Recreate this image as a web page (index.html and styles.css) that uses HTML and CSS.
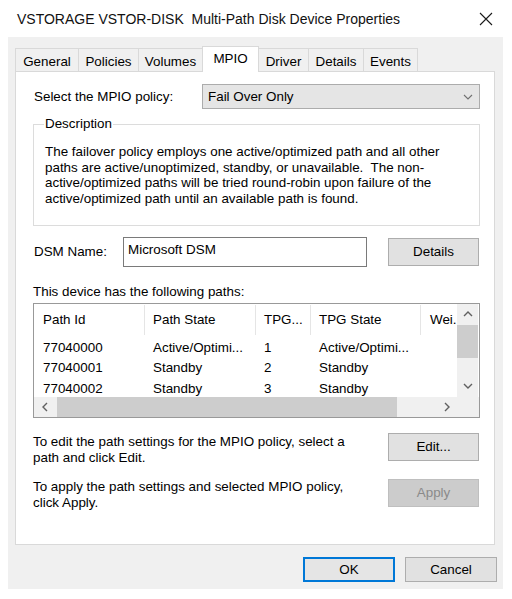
FILE: index.html
```html
<!DOCTYPE html>
<html>
<head>
<meta charset="utf-8">
<link rel="stylesheet" href="styles.css">
</head>
<body>
<div class="window">
  <div class="titlebar">
    <span class="title">VSTORAGE VSTOR-DISK&nbsp; Multi-Path Disk Device Properties</span>
    <svg class="close" width="14" height="14" viewBox="0 0 14 14"><path d="M1 1 L13 13 M13 1 L1 13" stroke="#1a1a1a" stroke-width="1.1" fill="none"/></svg>
  </div>
  <div class="dialog">
    <div class="tabs">
      <div class="tab t-general">General</div>
      <div class="tab t-policies">Policies</div>
      <div class="tab t-volumes">Volumes</div>
      <div class="tab t-mpio active">MPIO</div>
      <div class="tab t-driver">Driver</div>
      <div class="tab t-details">Details</div>
      <div class="tab t-events">Events</div>
    </div>
    <div class="panel">
      <div class="policy-row">
        <span class="policy-lbl">Select the MPIO policy:</span>
        <div class="select">
          <span>Fail Over Only</span>
          <svg width="10" height="6" viewBox="0 0 10 6"><path d="M1 1 L5 5 L9 1" stroke="#707070" stroke-width="1.1" fill="none"/></svg>
        </div>
      </div>
      <fieldset class="desc">
        <legend>Description</legend>
        <p>The failover policy employs one active/optimized path and all other<br>paths are active/unoptimized, standby, or unavailable.&nbsp; The non-<br>active/optimized paths will be tried round-robin upon failure of the<br>active/optimized path until an available path is found.</p>
      </fieldset>
      <div class="dsm-row">
        <span class="dsm-lbl">DSM Name:</span>
        <div class="input">Microsoft DSM</div>
        <button class="btn details">Details</button>
      </div>
      <div class="paths-lbl">This device has the following paths:</div>
      <div class="listbox">
        <div class="list-content">
          <div class="lrow head">
            <div>Path Id</div><div>Path State</div><div>TPG...</div><div>TPG State</div><div>Wei.</div>
          </div>
          <div class="lrow">
            <div>77040000</div><div>Active/Optimi...</div><div>1</div><div>Active/Optimi...</div><div></div>
          </div>
          <div class="lrow">
            <div>77040001</div><div>Standby</div><div>2</div><div>Standby</div><div></div>
          </div>
          <div class="lrow">
            <div>77040002</div><div>Standby</div><div>3</div><div>Standby</div><div></div>
          </div>
        </div>
        <div class="vscroll">
          <div class="sb-btn v"><svg width="10" height="6" viewBox="0 0 10 6"><path d="M1 5 L5 1 L9 5" stroke="#606060" stroke-width="1.4" fill="none"/></svg></div>
          <div class="v-track"><div class="v-thumb"></div></div>
          <div class="sb-btn v"><svg width="10" height="6" viewBox="0 0 10 6"><path d="M1 1 L5 5 L9 1" stroke="#606060" stroke-width="1.4" fill="none"/></svg></div>
        </div>
        <div class="hscroll">
          <div class="sb-btn h"><svg width="6" height="10" viewBox="0 0 6 10"><path d="M5 1 L1 5 L5 9" stroke="#606060" stroke-width="1.4" fill="none"/></svg></div>
          <div class="h-track"><div class="h-thumb"></div></div>
          <div class="sb-btn h"><svg width="6" height="10" viewBox="0 0 6 10"><path d="M1 1 L5 5 L1 9" stroke="#606060" stroke-width="1.4" fill="none"/></svg></div>
        </div>
        <div class="corner"></div>
      </div>
      <div class="action-row edit-row">
        <p>To edit the path settings for the MPIO policy, select a<br>path and click Edit.</p>
        <button class="btn">Edit...</button>
      </div>
      <div class="action-row apply-row">
        <p>To apply the path settings and selected MPIO policy,<br>click Apply.</p>
        <button class="btn" disabled>Apply</button>
      </div>
    </div>
    <div class="footer">
      <button class="btn ok">OK</button>
      <button class="btn">Cancel</button>
    </div>
  </div>
</div>
</body>
</html>
```
FILE: styles.css
```css
* { box-sizing: border-box; }
html, body { margin: 0; padding: 0; background: #fff; }
body {
  width: 512px;
  height: 599px;
  font-family: "Liberation Sans", Arial, sans-serif;
  font-size: 13.4px;
  color: #000;
  overflow: hidden;
}
.titlebar {
  height: 37px;
  display: flex;
  align-items: center;
  padding-left: 17px;
  padding-top: 1px;
}
.title { font-size: 14px; color: #111; }
.close { margin-left: auto; margin-right: 19px; }

.dialog {
  margin: 0 9px 0 8px;
  background: #f0f0f0;
  padding: 9px 6px 7px 7px;
}
.tabs {
  display: flex;
  align-items: flex-end;
  height: 25px;
}
.tab {
  height: 23px;
  border: 1px solid #d9d9d9;
  border-bottom: none;
  background: #f0f0f0;
  margin-right: -1px;
  display: flex;
  align-items: center;
  justify-content: center;
  padding-top: 3px;
  white-space: nowrap;
}
.tab.active {
  height: 26px;
  background: #fff;
  margin-bottom: -1px;
  padding-top: 0;
  padding-bottom: 2px;
  position: relative;
  z-index: 1;
}
.t-general { width: 64px; }
.t-policies { width: 61px; }
.t-volumes { width: 65px; }
.t-mpio { width: 57px; }
.t-driver { width: 51px; }
.t-details { width: 56px; }
.t-events { width: 55px; }

.panel {
  background: #fff;
  border: 1px solid #d9d9d9;
  height: 474px;
  margin-right: 2px;
  padding: 12px 14px 0 17px;
}
.policy-row {
  display: flex;
  align-items: center;
  height: 25px;
}
.policy-lbl { width: 169px; padding-left: 1px; }
.select {
  width: 278px;
  height: 25px;
  background: #e5e5e5;
  border: 1px solid #acacac;
  display: flex;
  align-items: center;
  justify-content: space-between;
  padding: 0 6px 0 5px;
}
.desc {
  margin: 7px 0 0;
  padding: 12px 11px 18px;
  border: 1px solid #dcdcdc;
  min-width: 0;
}
.desc legend {
  padding: 0 1px;
  margin-left: -1px;
  line-height: 16px;
}
.desc p {
  margin: 0;
  line-height: 15.7px;
  white-space: nowrap;
}
.dsm-row {
  display: flex;
  align-items: center;
  margin-top: 11px;
  height: 30px;
}
.dsm-lbl { width: 90px; padding-left: 1px; }
.input {
  width: 244px;
  height: 30px;
  border: 1px solid #7a7a7a;
  background: #fff;
  padding: 4px 0 0 4px;
  line-height: 16px;
}
.btn {
  font-family: "Liberation Sans", Arial, sans-serif;
  font-size: 13.4px;
  color: #000;
  background: #e1e1e1;
  border: 1px solid #adadad;
  padding: 0;
  margin: 0;
  width: 91px;
  height: 28px;
}
.btn:disabled {
  background: #cccccc;
  border-color: #bfbfbf;
  color: #8a8a8a;
}
.details { margin-left: auto; margin-right: 1px; }
.paths-lbl {
  margin-top: 17px;
  line-height: 16px;
}
.listbox {
  margin-top: 3px;
  height: 115px;
  border: 1px solid #999;
  display: grid;
  grid-template-columns: 1fr 22px;
  grid-template-rows: 93px 20px;
}
.list-content { overflow: hidden; }
.lrow {
  display: grid;
  grid-template-columns: 111px 111px 55px 110px 1fr;
  height: 20.5px;
  align-items: center;
}
.lrow > div {
  padding-left: 8px;
  white-space: nowrap;
  overflow: hidden;
}
.lrow > div:first-child { padding-left: 9px; }
.lrow.head {
  height: 33px;
  align-items: stretch;
}
.lrow.head > div {
  display: flex;
  align-items: center;
  border-right: 1px solid #e5e5e5;
  margin: 1px 0 2px;
}
.lrow.head > div:last-child { border-right: none; padding-left: 9px; }
.vscroll {
  background: #f0f0f0;
  display: flex;
  flex-direction: column;
  margin-right: 1px;
}
.sb-btn {
  display: flex;
  align-items: center;
  justify-content: center;
}
.sb-btn.v { height: 21px; }
.sb-btn.h { width: 21px; }
.v-track { flex: 1; }
.v-thumb { height: 33px; background: #cdcdcd; }
.hscroll {
  background: #f0f0f0;
  display: flex;
}
.h-track { flex: 1; padding-left: 2px; padding-right: 39px; }
.h-thumb { height: 100%; background: #cdcdcd; }
.corner { background: #f0f0f0; }

.action-row {
  display: flex;
  justify-content: space-between;
  align-items: flex-start;
}
.action-row p {
  margin: 0;
  line-height: 16px;
}
.action-row .btn { margin-right: 1px; }
.edit-row { margin-top: 15px; }
.edit-row p { margin-top: 1px; }
.apply-row { margin-top: 13px; }

.footer {
  display: flex;
  justify-content: flex-end;
  gap: 10px;
  margin-top: 12px;
}
.footer .btn { width: 92px; height: 25px; }
.footer .ok { border: 2px solid #0078d7; background: #e5e5e5; }
```
